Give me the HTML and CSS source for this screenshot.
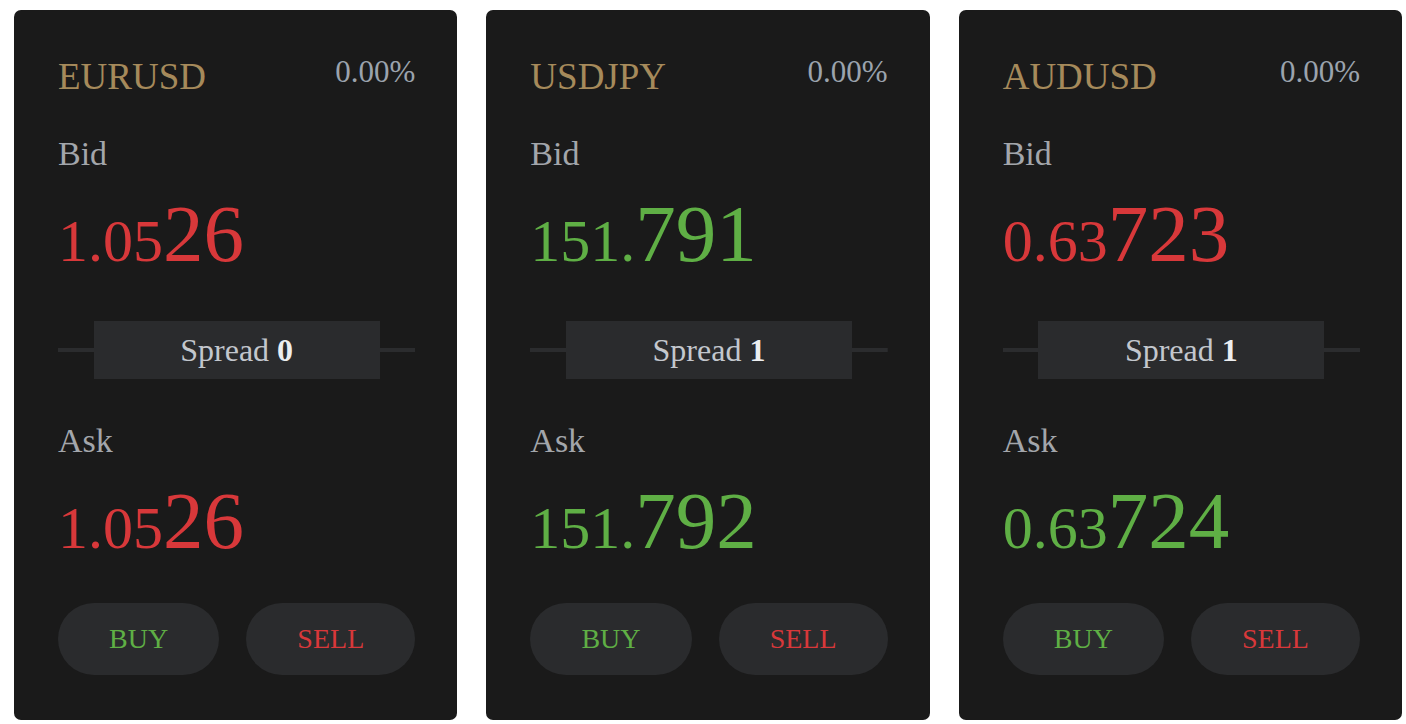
FILE: index.html
```html
<!DOCTYPE html>
<html lang="en">
<head>
<meta charset="UTF-8">
<title>Quotes</title>
<link rel="stylesheet" href="styles.css">
</head>
<body>
<div class="board">

  <div class="card">
    <div class="card-head">
      <div class="symbol">EURUSD</div>
      <div class="change">0.00%</div>
    </div>
    <div class="label label-bid">Bid</div>
    <div class="price down"><span class="price-small">1.05</span>26</div>
    <div class="spread"><div class="spread-box">Spread <b>0</b></div></div>
    <div class="label label-ask">Ask</div>
    <div class="price down"><span class="price-small">1.05</span>26</div>
    <div class="actions">
      <button class="btn btn-buy">BUY</button>
      <button class="btn btn-sell">SELL</button>
    </div>
  </div>

  <div class="card">
    <div class="card-head">
      <div class="symbol">USDJPY</div>
      <div class="change">0.00%</div>
    </div>
    <div class="label label-bid">Bid</div>
    <div class="price up"><span class="price-small">151.</span>791</div>
    <div class="spread"><div class="spread-box">Spread <b>1</b></div></div>
    <div class="label label-ask">Ask</div>
    <div class="price up"><span class="price-small">151.</span>792</div>
    <div class="actions">
      <button class="btn btn-buy">BUY</button>
      <button class="btn btn-sell">SELL</button>
    </div>
  </div>

  <div class="card">
    <div class="card-head">
      <div class="symbol">AUDUSD</div>
      <div class="change">0.00%</div>
    </div>
    <div class="label label-bid">Bid</div>
    <div class="price down"><span class="price-small">0.63</span>723</div>
    <div class="spread"><div class="spread-box">Spread <b>1</b></div></div>
    <div class="label label-ask">Ask</div>
    <div class="price up"><span class="price-small">0.63</span>724</div>
    <div class="actions">
      <button class="btn btn-buy">BUY</button>
      <button class="btn btn-sell">SELL</button>
    </div>
  </div>

</div>
</body>
</html>
```

FILE: styles.css
```css
body {
	margin: 10px 4px 4px 14px;
	background-color: #fff;
	font-family: "Liberation Serif", "DejaVu Serif", serif;
}

.board {
	display: grid;
	grid-template-columns: repeat(3, 1fr);
	gap: 29px;
}

.card {
	height: 710px;
	box-sizing: border-box;
	padding: 48px 42px 0 44px;
	background-color: #1a1a1a;
	border-radius: 7px;
}

.card-head {
	display: flex;
	justify-content: space-between;
	align-items: flex-start;
}

.symbol {
	font-size: 37px;
	line-height: 1;
	color: #a68a5b;
}

.change {
	font-size: 31px;
	line-height: 1;
	color: #9ba3ad;
	margin-top: -2px;
}

.label {
	font-size: 34px;
	line-height: 1;
	color: #a3a6ab;
}

.label-bid {
	margin-top: 42px;
}

.label-ask {
	margin-top: 45px;
}

.price {
	margin-top: 23px;
	font-size: 81px;
	line-height: 1;
}

.price-small {
	font-size: 60px;
}

.down {
	color: #d8383a;
}

.up {
	color: #5faf45;
}

/* thin rule behind the spread box */
.spread {
	margin-top: 46px;
	background: linear-gradient(#2b2c2e, #2b2c2e) center / 100% 4px no-repeat;
}

.spread-box {
	width: 80%;
	margin: 0 auto;
	height: 58px;
	line-height: 58px;
	text-align: center;
	font-size: 32px;
	color: #c3c7cd;
	background-color: #2a2b2d;
}

.spread-box b {
	color: #eceef0;
}

.actions {
	display: flex;
	gap: 27px;
	margin-top: 41px;
}

.btn {
	flex: 1 1 auto;
	height: 72px;
	padding: 0;
	border: none;
	border-radius: 36px;
	background-color: #2a2b2d;
	font-family: inherit;
	font-size: 28px;
}

.btn-buy {
	color: #5faf45;
}

.btn-sell {
	color: #d8383a;
}
```
